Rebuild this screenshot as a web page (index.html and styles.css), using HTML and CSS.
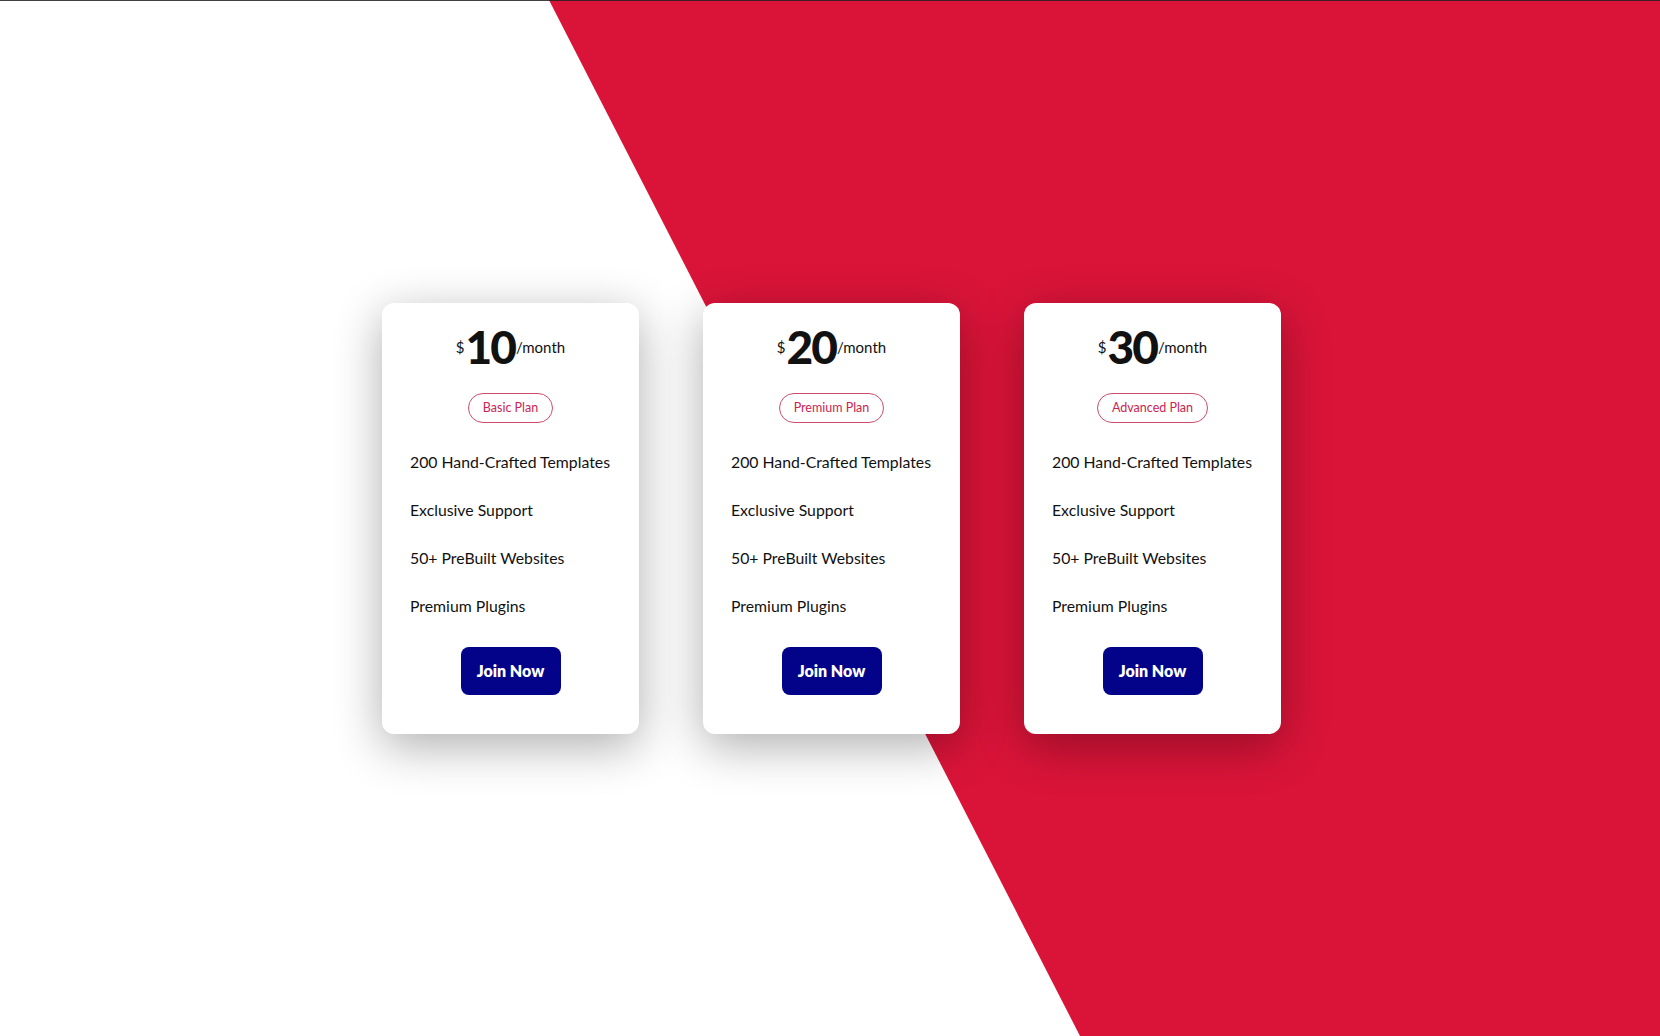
FILE: index.html
```html
<!DOCTYPE html>
<html lang="en">
<head>
    <meta charset="UTF-8">
    <meta name="viewport" content="width=device-width, initial-scale=1.0">
    <title>Pricing</title>
    <link rel="stylesheet" href="styles.css">
</head>
<body>
<div class="pricing">
    <div class="card">
        <div class="price"><span class="currency">$</span><span class="amount">10</span><span class="period">/month</span></div>
        <span class="plan">Basic Plan</span>
        <ul class="features">
            <li>200 Hand-Crafted Templates</li>
            <li>Exclusive Support</li>
            <li>50+ PreBuilt Websites</li>
            <li>Premium Plugins</li>
        </ul>
        <button type="button" class="join">Join Now</button>
    </div>
    <div class="card">
        <div class="price"><span class="currency">$</span><span class="amount">20</span><span class="period">/month</span></div>
        <span class="plan">Premium Plan</span>
        <ul class="features">
            <li>200 Hand-Crafted Templates</li>
            <li>Exclusive Support</li>
            <li>50+ PreBuilt Websites</li>
            <li>Premium Plugins</li>
        </ul>
        <button type="button" class="join">Join Now</button>
    </div>
    <div class="card">
        <div class="price"><span class="currency">$</span><span class="amount">30</span><span class="period">/month</span></div>
        <span class="plan">Advanced Plan</span>
        <ul class="features">
            <li>200 Hand-Crafted Templates</li>
            <li>Exclusive Support</li>
            <li>50+ PreBuilt Websites</li>
            <li>Premium Plugins</li>
        </ul>
        <button type="button" class="join">Join Now</button>
    </div>
</div>
</body>
</html>
```

FILE: styles.css
```css
* {
    box-sizing: border-box;
}

body {
    font-family: Lato, "Noto Sans", sans-serif;
    background-color: #ffffff;
    color: #111111;
    margin: 0;
    padding: 0;
    height: 100vh;
    display: flex;
    justify-content: center;
    align-items: center;
    position: relative;
    overflow: hidden;
}

/* red diagonal background */
body::before {
    content: "";
    position: absolute;
    inset: 0;
    background-color: #da1439;
    clip-path: polygon(33.07% 0, 100% 0, 100% 100%, 65.06% 100%);
}

body::after {
    content: "";
    position: absolute;
    top: 0;
    left: 0;
    right: 0;
    height: 1px;
    background-color: rgba(30, 30, 30, 0.85);
}

.pricing {
    position: relative;
    display: flex;
    gap: 64px;
    margin-left: 3px;
}

.card {
    width: 257px;
    height: 431px;
    background-color: #ffffff;
    border-radius: 12px;
    box-shadow: 0 12px 48px rgba(0, 0, 0, 0.32);
    padding: 21px 28px 39px;
    display: flex;
    flex-direction: column;
    align-items: center;
}

.price {
    display: flex;
    align-items: center;
    justify-content: center;
    height: 46px;
}

.currency {
    font-size: 15px;
    margin-right: 1px;
}

.amount {
    font-size: 46px;
    font-weight: 900;
    line-height: 1;
    letter-spacing: -2px;
}

.period {
    font-size: 15px;
    margin-left: 1px;
}

.plan {
    margin-top: 23px;
    height: 30px;
    padding: 0 14px;
    border: 1px solid #cf4b6b;
    border-radius: 15px;
    color: #c92552;
    font-size: 12.5px;
    line-height: 28px;
}

.features {
    list-style: none;
    margin: 27px 0 0;
    padding: 0;
    align-self: stretch;
}

.features li {
    font-size: 15.8px;
    line-height: 24px;
    margin-bottom: 24px;
    white-space: nowrap;
}

.features li:last-child {
    margin-bottom: 0;
}

.join {
    margin-top: auto;
    width: 100px;
    height: 48px;
    background-color: #03038a;
    color: #ffffff;
    border: none;
    border-radius: 8px;
    font-family: inherit;
    font-size: 16px;
    font-weight: 800;
    cursor: pointer;
}
```
